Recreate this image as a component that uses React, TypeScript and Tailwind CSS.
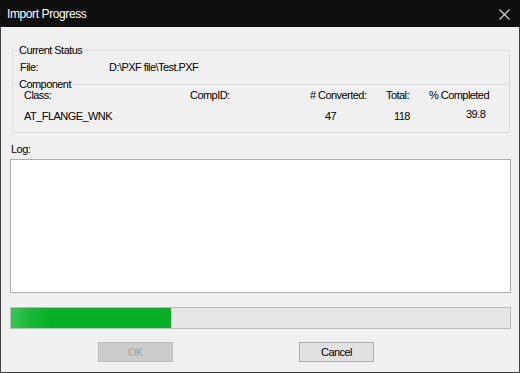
import React from "react";

const font = "font-['Liberation_Sans',Arial,sans-serif]";

function Legend({ children }: { children: React.ReactNode }) {
  return (
    <span className="absolute -top-[7px] left-[5px] bg-[#f0f0f0] px-px text-[11px] leading-[13px] tracking-[-0.55px] text-black">
      {children}
    </span>
  );
}

export default function App() {
  const percent = 39.8;
  return (
    <div className={`flex h-[373px] w-[520px] flex-col bg-[#f0f0f0] ${font}`}>
      {/* title bar */}
      <div className="flex h-[27px] shrink-0 items-center justify-between bg-[#0f0f0f] pl-[7px] pr-[10px]">
        <span className="text-[12px] leading-[14px] tracking-[-0.4px] text-white">Import Progress</span>
        <svg width="11" height="11" viewBox="0 0 11 11" className="mt-[1px]">
          <path d="M0.5 0.5 L10.5 10.5 M10.5 0.5 L0.5 10.5" stroke="#d8d8d8" strokeWidth="1.1" fill="none" />
        </svg>
      </div>

      {/* body */}
      <div className="flex flex-1 flex-col border-x border-b border-[#424242] text-[11px] leading-[13px] tracking-[-0.55px] text-black">
        {/* Current Status group */}
        <div className="relative ml-[11px] mt-[23px] h-[83px] w-[498px] border border-[#dcdcdc]">
          <Legend>Current Status</Legend>
          <div className="flex h-[33px] pl-[7px] pt-[10px]">
            <span className="w-[89px]">File:</span>
            <span>D:\PXF file\Test.PXF</span>
          </div>
          <div className="relative border-t border-[#dcdcdc]">
            <Legend>Component</Legend>
            <div className="flex pl-[11px] pt-[4px]">
              <span className="w-[166px]">Class:</span>
              <span className="w-[120px]">CompID:</span>
              <span className="w-[76px]">
                # Converted:
              </span>
              <span className="w-[43px]">Total:</span>
              <span>% Completed</span>
            </div>
            <div className="mt-[8px] flex items-start pl-[11px]">
              <span className="w-[301px]">AT_FLANGE_WNK</span>
              <span className="w-[69px]">47</span>
              <span className="w-[72px]">118</span>
              <span className="-mt-[2px]">{percent}</span>
            </div>
          </div>
        </div>

        {/* Log */}
        <div className="ml-[10px] mt-[10px]">Log:</div>
        <div className="ml-[9px] mt-[3px] h-[134px] w-[501px] border border-[#adadad] bg-white" />

        {/* progress */}
        <div className="ml-[9px] mt-[14px] flex h-[22px] w-[501px] border border-[#bcbcbc] bg-[#e6e6e6]">
          <div className="h-full w-[160px] bg-[linear-gradient(90deg,#3ac657_0px,#1bb83a_18px,#06b025_40px)]" />
        </div>

        {/* buttons */}
        <div className="ml-[97px] mt-[13px] flex gap-[126px]">
          <button
            disabled
            className="h-[20px] w-[75px] border border-[#bfbfbf] bg-[#cccccc] text-[11px] leading-[18px] text-[#a0a0a0]"
          >
            OK
          </button>
          <button className="h-[20px] w-[75px] border border-[#adadad] bg-[#e1e1e1] text-[11px] leading-[18px] text-black">
            Cancel
          </button>
        </div>
      </div>
    </div>
  );
}
